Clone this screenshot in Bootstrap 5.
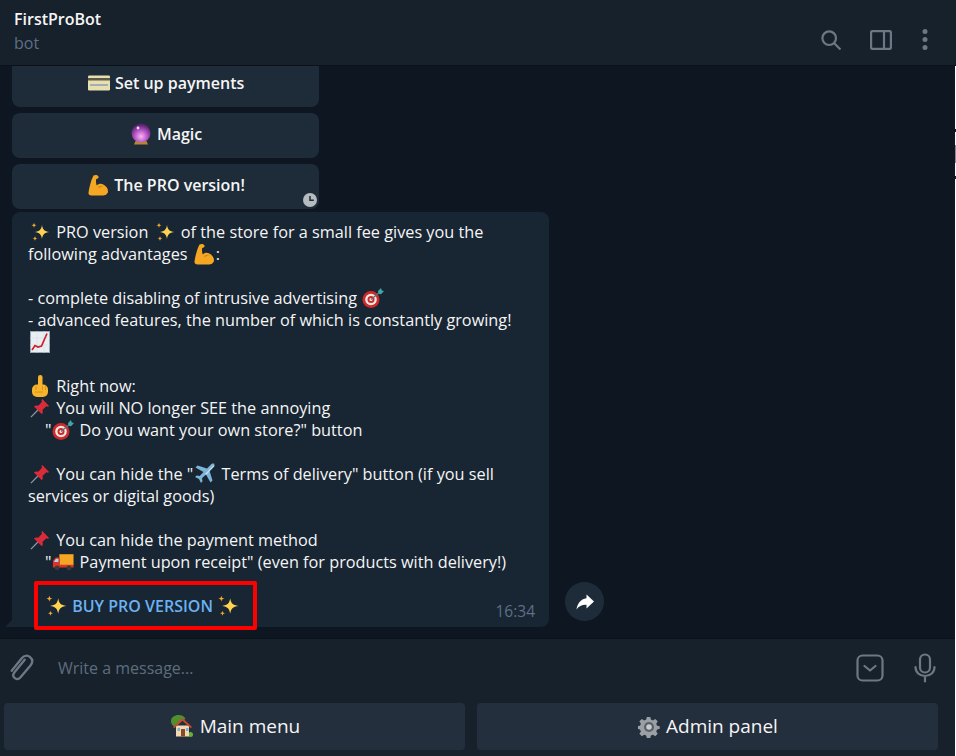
<!DOCTYPE html>
<html>

<head>
  <meta charset="utf-8">
  <meta name="viewport" content="width=device-width">
  <title>FirstProBot</title>
  <link href="https://cdn.jsdelivr.net/npm/bootstrap@5.3.3/dist/css/bootstrap.min.css" rel="stylesheet" />
  <script src="https://cdn.jsdelivr.net/npm/bootstrap@5.3.3/dist/js/bootstrap.bundle.min.js"></script>
  <style>
    html, body { height: 100%; }
    body { background: #0e1621; font-family: "Open Sans", "Liberation Sans", sans-serif; font-size: 16px; color: #f5f5f5; overflow: hidden; }
    .app-shell { width: 956px; height: 756px; }
    .top-bar { height: 66px; background: #17212b; border-bottom: 1px solid #0b121a; padding: 8px 28px 0 14px; flex: none; position: relative; z-index: 2; }
    .bot-name { font-weight: 600; font-size: 16px; line-height: 22px; color: #f5f5f5; }
    .bot-status { font-size: 16px; line-height: 26px; color: #5d7086; }
    .top-icons svg { display: block; margin-top: 22px; }
    .top-icons .icon-search { margin-right: 29px; }
    .top-icons .icon-panel { margin-right: 30px; }
    .top-icons .icon-dots { margin-top: 21px; }
    .chat-area { height: 572px; flex: none; overflow: hidden; padding: 0 12px; justify-content: flex-end; }
    .inline-btn { width: 307px; height: 45px; flex: none; background: #1e2c3a; border-radius: 8px; font-weight: 600; line-height: 43px; text-align: center; color: #f5f5f5; position: relative; margin-bottom: 6px; }
    .inline-btn.first-btn { height: 44px; line-height: 41px; margin-top: -1px; border-top-left-radius: 0; border-top-right-radius: 0; }
    .inline-btn.last-btn { margin-bottom: 3px; }
    .clock-badge { position: absolute; right: 2px; bottom: 2px; width: 14px; height: 14px; display: block; }
    .msg-row { align-items: flex-end; flex: none; margin-bottom: 11px; }
    .msg-bubble { width: 537px; height: 415px; background: #182533; border-radius: 8px 8px 8px 0; padding: 9px 0 0 16px; position: relative; }
    .msg-tail { position: absolute; left: -7px; bottom: 0; width: 7px; height: 7px; display: block; }
    .msg-text { white-space: pre; line-height: 22px; margin: 0; font-size: 16.25px; color: #f5f5f5; }
    .buy-box { width: 223px; height: 49px; border: 4px solid #fe0000; border-radius: 2px; margin: 8px 0 0 6px; display: flex; align-items: center; padding-left: 7px; font-weight: 600; color: #6ab2f2; white-space: pre; }
    .buy-box .em { width: 22px; height: 22px; margin: 0 1px 0 0; }
    .msg-time { position: absolute; right: 14px; bottom: 6px; color: #5d7086; font-size: 15.5px; line-height: 20px; }
    .forward-btn { width: 39px; height: 39px; border-radius: 50%; background: #1e2c3a; margin: 0 0 6px 16px; }
    .compose-bar { height: 62px; flex: none; background: #17212b; padding: 0 19px 4px 8px; border-top: 1px solid #0b121a; }
    .compose-text { color: #5d6d7e; margin-left: 24px; }
    .keyboard-bar { height: 56px; flex: none; background: #17212b; padding: 3px 18px 6px 4px; gap: 12px; }
    .kb-btn { flex: 1 1 0; background: #242f3d; border-radius: 4px; font-weight: 500; font-size: 19px; line-height: 47px; text-align: center; color: #f5f5f5; }
    .em { width: 20px; height: 20px; vertical-align: -4px; display: inline-block; margin: 0 2px; }
    .em.em-wide { width: 22px; margin: 0 1px; }
    .em.em-big { width: 22px; height: 22px; vertical-align: -5px; margin: 0 1px; }
    .em.em-tall { height: 22px; vertical-align: -5px; }
    .em.em-large { width: 24px; height: 24px; vertical-align: -5px; margin: 0 1px; }
    .edge-line { position: absolute; top: 0; right: 0; width: 1px; height: 756px; background: linear-gradient(#fff 0 129px, #1c2630 129px 132px, #fff 132px 145px, #8b8f94 145px 163px, #fff 163px 176px, #1c2630 176px 179px, #fff 179px); }
  </style>
</head>

<body>
  <svg width="0" height="0" class="position-absolute">
    <defs>
      <symbol id="sparkles" viewBox="0 0 20 20">
        <path fill="#ffd24f" d="M12 3c.8 4.800 2.200 6.200 7.500 7-5.300.8-6.700 2.200-7.500 7-.8-4.800-2.200-6.200-7.500-7 5.300-.8 6.700-2.200 7.500-7z" />
        <path fill="#f7a82c" d="M4 .5c.3 2 .8 2.500 2.800 2.800-2 .3-2.500.8-2.800 2.800-.3-2-.8-2.500-2.800-2.800 2-.3 2.500-.8 2.800-2.800z" />
        <path fill="#f7a82c" d="M5 14c.3 1.800.7 2.200 2.500 2.500-1.800.3-2.200.7-2.500 2.500-.3-1.800-.7-2.200-2.500-2.500 1.800-.3 2.200-.7 2.500-2.500z" />
      </symbol>
      <symbol id="card" viewBox="0 0 22 20">
        <rect x="0" y="2.500" width="22" height="15" rx="1.200" fill="#e9dfae" />
        <rect x="0" y="5" width="22" height="2.500" fill="#5b5a49" />
        <rect x="2" y="11" width="18" height="2" fill="#9fb0b5" />
      </symbol>
      <symbol id="ball" viewBox="0 0 20 22">
        <defs>
          <radialGradient id="ballFill" cx="50%" cy="68%" r="62%">
            <stop offset="0" stop-color="#fbb4f4" />
            <stop offset="0.55" stop-color="#b353c4" />
            <stop offset="1" stop-color="#55226c" />
          </radialGradient>
        </defs>
        <path fill="#b7872c" d="M4.500 18h11l1.500 3.500H3z" />
        <circle cx="10" cy="10" r="9.500" fill="url(#ballFill)" />
        <circle cx="7" cy="5" r="1.400" fill="#f6d9f6" />
      </symbol>
      <symbol id="muscle" viewBox="0 0 22 22">
        <path fill="#f5a623" d="M6.500 1.500C8.500.5 11 1 11.500 2.500c.4 1.300-.7 2.400-2.300 2.400-.4 2.200-.2 4.200.5 6.600 1.700-1.800 4.300-2.200 6.600-1 2.600 1.300 4.700 3.800 4.700 6.700 0 2.800-2.600 4.300-6 4.300H4.500c-2 0-3.300-1.100-3-3C2.200 14 3.600 7 6.500 1.500z" />
        <path fill="#d98512" d="M11 13c1.800-1.400 4-1.500 5.800-.4-1.700-.1-3.700.5-4.800 1.800z" />
      </symbol>
      <symbol id="target" viewBox="0 0 22 20">
        <circle cx="9" cy="11.500" r="8.500" fill="#cf2a2a" />
        <circle cx="9" cy="11.500" r="5.800" fill="#f3e9e4" />
        <circle cx="9" cy="11.500" r="3.500" fill="#cf2a2a" />
        <circle cx="9" cy="11.500" r="1.500" fill="#f3e9e4" />
        <path stroke="#5f6d74" stroke-width="1.300" d="M9 11.500 18 4" />
        <path fill="#3fa7a9" d="m16 3 3-3 .8 2.500L22 3l-3 3.200-2.500-.4z" />
      </symbol>
      <symbol id="chart" viewBox="0 0 20 22">
        <rect x="0.500" y="0.500" width="19" height="21" fill="#e8eef2" stroke="#98a6af" />
        <path stroke="#d7dfe4" stroke-width=".6" d="M0 7h20M0 14h20M7 0v22M14 0v22" />
        <path fill="none" stroke="#cf2030" stroke-width="1.700" d="M2 19 5 14.500 8 16 11.500 15 17 2.500" />
      </symbol>
      <symbol id="finger" viewBox="0 0 20 22">
        <rect x="2" y="9.500" width="16" height="12.500" rx="5" fill="#f7b32b" />
        <rect x="8" y="0" width="4.500" height="14" rx="2.200" fill="#f7b32b" />
        <path fill="none" stroke="#d08a12" stroke-width=".8" d="M6 11v4M12.500 11v4M15.500 11v4M5 17h8" />
      </symbol>
      <symbol id="pin" viewBox="0 0 22 22">
        <path stroke="#8b98a3" stroke-width="1.400" d="M1 21 9 13" />
        <path fill="#d92b3a" d="M13.500 1c-1 .8-1 2-.3 3L9 8.500c-1.700-.7-3.500-.4-4.700.8L13 18c1.200-1.300 1.500-3 .7-4.700L18 9c1 .7 2.200.7 3-.3z" />
      </symbol>
      <symbol id="plane" viewBox="0 0 22 22">
        <path fill="#7cb5d8" d="M20.800 1.200c-1.100-1.100-3-.6-4.300.7l-3.500 3.500L3.500 2.500 1.500 4.500 9.500 9l-3.800 4-3-.5L1 14l4 2 2 4 1.500-1.700-.5-3 4-3.800 4.500 8 2-2-2.900-9.500 3.500-3.500c1.300-1.300 1.800-3.200.7-4.300z" />
        <path fill="#c8e3f2" d="m20 2-9 9 1 1 8.500-9z" />
      </symbol>
      <symbol id="truck" viewBox="0 0 24 20">
        <rect x="8" y="1.500" width="15.500" height="12" fill="#f5a623" />
        <path fill="#d9342b" d="M1 15V8.500L4 5h4.500v11H1z" />
        <path fill="#a8d4ea" d="M2.500 9 4.500 6.500h2.500V10H2.500z" />
        <rect x="8" y="13" width="15.500" height="3" fill="#d9342b" />
        <circle cx="5.500" cy="16.500" r="2.600" fill="#3a3a3a" />
        <circle cx="18.500" cy="16.500" r="2.600" fill="#3a3a3a" />
      </symbol>
      <symbol id="house" viewBox="0 0 24 24">
        <path fill="#4f8f2e" d="M1 7c0-3.500 3.500-6 7.500-6 3.500 0 6 1.500 7 4L8 9l-3 3.500C2.500 12 1 10 1 7z" />
        <circle cx="20.500" cy="20.500" r="2.500" fill="#66ad3a" />
        <path fill="#f3d9b0" d="M6 11.500h13v11H6z" />
        <path fill="#c9482f" d="M12.500 4 22 13l-1.300 1.300-8.200-7.600-8.200 7.600L3 13z" />
        <rect x="11" y="15" width="4" height="7.500" fill="#8a4a2a" />
        <rect x="7.500" y="14" width="2.500" height="3" fill="#6fb4df" />
        <rect x="16" y="14" width="2.500" height="3" fill="#6fb4df" />
      </symbol>
      <symbol id="gear" viewBox="0 0 24 24">
        <path fill="#9aa0a6" d="M10 1h4l.6 3 2.400 1 2.600-1.700 2.800 2.800L20.700 8.700l1 2.300 3 .6v3l-3 .7-1 2.300 1.700 2.600-2.800 2.800-2.600-1.700-2.400 1-.6 3h-4l-.6-3-2.400-1-2.600 1.700-2.800-2.800 1.700-2.600-1-2.300-3-.7v-3l3-.6 1-2.300L1.600 6.100l2.800-2.800L7 5l2.400-1z" transform="scale(.96)" />
        <circle cx="12" cy="12" r="5.500" fill="#5c6066" />
        <circle cx="12" cy="12" r="3" fill="#c8ccd0" />
      </symbol>
    </defs>
  </svg>

  <div class="app-shell d-flex flex-column position-relative">
    <header class="top-bar d-flex justify-content-between">
      <div>
        <div class="bot-name">FirstProBot</div>
        <div class="bot-status">bot</div>
      </div>
      <div class="top-icons d-flex align-items-start">
        <svg class="icon-search" width="20" height="20" viewBox="0 0 20 20" fill="none" stroke="#6c7883" stroke-width="2.200">
          <circle cx="8.200" cy="8.200" r="6.800" />
          <path d="m13 13 6.500 6.500" />
        </svg>
        <svg class="icon-panel" width="22" height="20" viewBox="0 0 22 20" fill="none" stroke="#6c7883" stroke-width="2.200">
          <rect x="1.100" y="1.100" width="19.800" height="17.800" rx="1.200" />
          <path d="M14 1v18" />
        </svg>
        <svg class="icon-dots" width="6" height="21" viewBox="0 0 6 21" fill="#6c7883">
          <circle cx="3" cy="2.600" r="2.500" />
          <circle cx="3" cy="10.500" r="2.500" />
          <circle cx="3" cy="18.400" r="2.500" />
        </svg>
      </div>
    </header>

    <main class="chat-area d-flex flex-column">
      <div class="inline-btn first-btn"><svg class="em em-wide"><use href="#card" /></svg> Set up payments</div>
      <div class="inline-btn"><svg class="em em-tall"><use href="#ball" /></svg> Magic</div>
      <div class="inline-btn last-btn"><svg class="em em-big"><use href="#muscle" /></svg> The PRO version!
        <svg class="clock-badge" viewBox="0 0 14 14">
          <circle cx="7" cy="7" r="7" fill="#b6bbc0" />
          <path d="M7 3v4.300h3.800" fill="none" stroke="#1e2c3a" stroke-width="1.500" />
        </svg>
      </div>

      <div class="msg-row d-flex">
        <div class="msg-bubble">
          <svg class="msg-tail" viewBox="0 0 7 7"><path d="M7 0v7H0z" fill="#182533" /></svg>
<p class="msg-text"><svg class="em"><use href="#sparkles" /></svg> PRO version <svg class="em"><use href="#sparkles" /></svg> of the store for a small fee gives you the
following advantages <svg class="em em-big"><use href="#muscle" /></svg>:

- complete disabling of intrusive advertising <svg class="em em-wide"><use href="#target" /></svg>
- advanced features, the number of which is constantly growing!
<svg class="em em-tall"><use href="#chart" /></svg>

<svg class="em em-tall"><use href="#finger" /></svg> Right now:
<svg class="em"><use href="#pin" /></svg> You will NO longer SEE the annoying
    "<svg class="em em-wide"><use href="#target" /></svg> Do you want your own store?" button

<svg class="em"><use href="#pin" /></svg> You can hide the "<svg class="em em-big"><use href="#plane" /></svg> Terms of delivery" button (if you sell
services or digital goods)

<svg class="em"><use href="#pin" /></svg> You can hide the payment method
    "<svg class="em em-wide"><use href="#truck" /></svg> Payment upon receipt" (even for products with delivery!)</p>
          <div class="buy-box"><svg class="em"><use href="#sparkles" /></svg> BUY PRO VERSION <svg class="em"><use href="#sparkles" /></svg></div>
          <span class="msg-time">16:34</span>
        </div>
        <button class="forward-btn border-0 d-flex align-items-center justify-content-center p-0" type="button" aria-label="Forward">
          <svg width="18" height="16" viewBox="0 0 18 16"><path fill="#fff" d="M10.500 0.500 18 7.500l-7.500 7V10.800C6 10.600 3 12 .5 15.500 1.300 9.800 4.500 5 10.500 4.200z" /></svg>
        </button>
      </div>
    </main>

    <div class="compose-bar d-flex align-items-center">
      <svg width="26" height="28" viewBox="0 0 28 30" fill="none" stroke="#6c7883" stroke-width="2.500" stroke-linecap="round">
        <path d="M18 5.500 7 19c-2 2.500-1.500 5 .3 6.500s4.300 1.300 6.200-1L24 12c3-3.700 2.500-7-.2-9.200S17.500.8 14.800 4L4 17.500" transform="translate(0 .5)" />
      </svg>
      <span class="compose-text flex-grow-1">Write a message...</span>
      <svg width="28" height="28" viewBox="0 0 28 28" fill="none" stroke="#6c7883" stroke-width="2.200" style="margin-right:29px">
        <rect x="1.500" y="1.500" width="25" height="25" rx="5" />
        <path d="m8.500 12 5.500 4.500 5.500-4.500" stroke-linecap="round" stroke-linejoin="round" />
      </svg>
      <svg width="24" height="30" viewBox="0 0 22 30" fill="none" stroke="#6c7883" stroke-width="2.200" stroke-linecap="round">
        <rect x="6" y="1.500" width="10" height="18" rx="5" />
        <path d="M1.500 14c0 5.500 4 9 9.500 9s9.500-3.500 9.500-9M11 23v5.500" />
      </svg>
    </div>

    <div class="keyboard-bar d-flex">
      <div class="kb-btn"><svg class="em em-large"><use href="#house" /></svg> Main menu</div>
      <div class="kb-btn"><svg class="em em-big"><use href="#gear" /></svg> Admin panel</div>
    </div>
    <div class="edge-line"></div>
  </div>
</body>

</html>
